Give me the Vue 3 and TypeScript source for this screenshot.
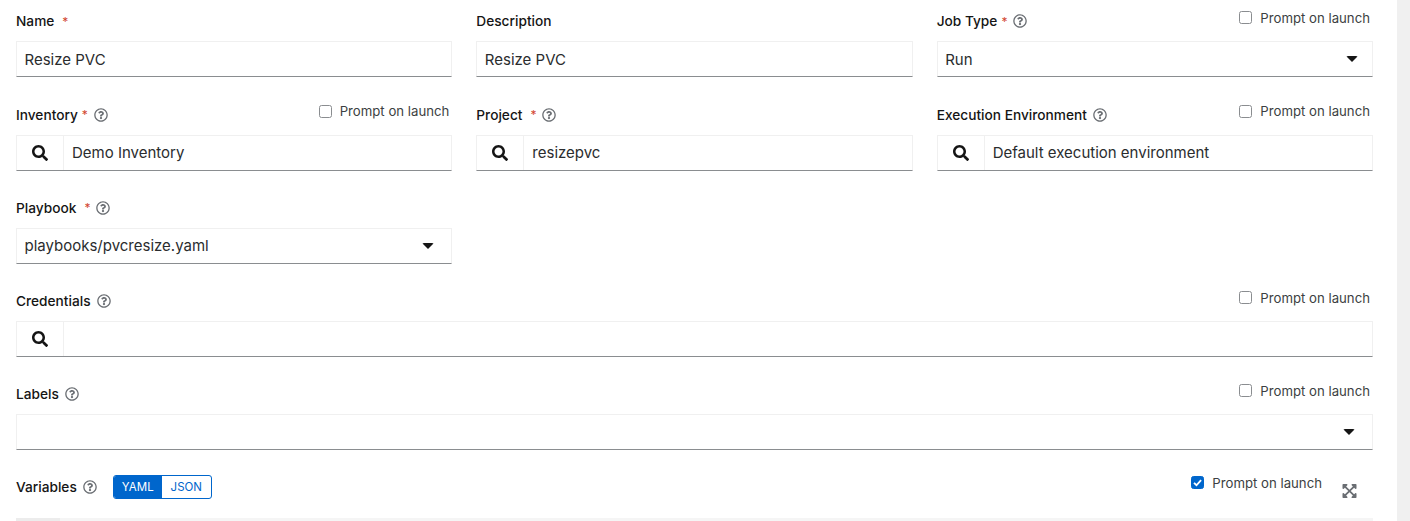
<script setup lang="ts">
interface Field {
  label: string;
  required?: boolean;
  wideStar?: boolean;
  help?: boolean;
  prompt?: boolean;
  kind: 'text' | 'select' | 'lookup';
  value: string;
  span?: boolean;
  skipAfter?: boolean;
}
const fields: Field[] = [
  { label: 'Name', required: true, wideStar: true, kind: 'text', value: 'Resize PVC' },
  { label: 'Description', kind: 'text', value: 'Resize PVC' },
  { label: 'Job Type', required: true, help: true, prompt: true, kind: 'select', value: 'Run' },
  { label: 'Inventory', required: true, help: true, prompt: true, kind: 'lookup', value: 'Demo Inventory' },
  { label: 'Project', required: true, wideStar: true, help: true, kind: 'lookup', value: 'resizepvc' },
  { label: 'Execution Environment', help: true, prompt: true, kind: 'lookup', value: 'Default execution environment' },
  { label: 'Playbook', required: true, wideStar: true, help: true, kind: 'select', value: 'playbooks/pvcresize.yaml', skipAfter: true },
  { label: 'Credentials', help: true, prompt: true, kind: 'lookup', value: '', span: true },
  { label: 'Labels', help: true, prompt: true, kind: 'select', value: '', span: true },
];
const helpPath = 'M256 8C119 8 8 119.043 8 256c0 136.995 111 248 248 248s248-111.005 248-248C504 119.043 393 8 256 8zm0 448c-110.532 0-200-89.451-200-200 0-110.531 89.451-200 200-200 110.532 0 200 89.451 200 200 0 110.532-89.451 200-200 200zm107.244-255.2c0 67.052-72.421 68.084-72.421 92.863V300c0 6.627-5.373 12-12 12h-45.647c-6.627 0-12-5.373-12-12v-8.659c0-35.745 27.1-50.034 47.579-61.516 17.561-9.845 28.324-16.541 28.324-29.579 0-17.246-21.999-28.693-39.784-28.693-23.189 0-33.894 10.977-48.942 29.969-4.057 5.12-11.46 6.071-16.666 2.124l-27.824-21.098c-5.107-3.873-6.251-11.066-2.644-16.363C184.846 131.491 214.94 112 261.794 112c49.071 0 101.45 38.304 101.45 88.8zM298 368c0 23.159-18.841 42-42 42s-42-18.841-42-42 18.841-42 42-42 42 18.841 42 42z';
const searchPath = 'M505 442.7L405.3 343c-4.5-4.5-10.6-7-17-7H372c27.6-35.3 44-79.7 44-128C416 93.1 322.9 0 208 0S0 93.1 0 208s93.1 208 208 208c48.3 0 92.7-16.4 128-44v16.3c0 6.4 2.5 12.5 7 17l99.7 99.7c9.4 9.4 24.6 9.4 33.9 0l28.3-28.3c9.4-9.4 9.4-24.6.1-34zM208 336c-70.7 0-128-57.2-128-128 0-70.7 57.2-128 128-128 70.7 0 128 57.2 128 128 0 70.7-57.2 128-128 128z';
const expandPath = 'M448 344v112a23.94 23.94 0 0 1-24 24H312c-21.39 0-32.09-25.9-17-41l36.2-36.2L224 295.6 116.77 402.9 153 439c15.09 15.1 4.39 41-17 41H24a23.94 23.94 0 0 1-24-24V344c0-21.4 25.89-32.1 41-17l36.19 36.2L184.46 256 77.18 148.7 41 185c-15.1 15.1-41 4.4-41-17V56a23.94 23.94 0 0 1 24-24h112c21.39 0 32.09 25.9 17 41l-36.2 36.2L224 216.4l107.23-107.3L295 73c-15.09-15.1-4.39-41 17-41h112a23.94 23.94 0 0 1 24 24v112c0 21.4-25.89 32.1-41 17l-36.19-36.2L263.54 256l107.28 107.3L407 327.1c15.1-15.2 41-4.5 41 16.9z';
</script>

<template>
  <div class="page">
    <main class="form">
      <div class="grid">
        <template v-for="f in fields" :key="f.label">
          <div class="field" :class="{ span: f.span }">
            <div class="head">
              <span class="label">{{ f.label }}</span>
              <span v-if="f.required" class="star" :class="{ wide: f.wideStar }">*</span>
              <svg v-if="f.help" class="help" viewBox="0 0 512 512"><path :d="helpPath" /></svg>
              <label v-if="f.prompt" class="prompt"><span class="box"></span>Prompt on launch</label>
            </div>
            <div class="control">
              <span v-if="f.kind === 'lookup'" class="search">
                <svg viewBox="0 0 512 512"><path :d="searchPath" /></svg>
              </span>
              <span class="value">{{ f.value }}</span>
              <span v-if="f.kind === 'select'" class="caret"></span>
            </div>
          </div>
          <div v-if="f.skipAfter" class="filler"></div>
        </template>
        <div class="field span vars">
          <div class="head">
            <span class="label">Variables</span>
            <svg class="help" viewBox="0 0 512 512"><path :d="helpPath" /></svg>
            <div class="toggle">
              <span class="on">YAML</span>
              <span class="off">JSON</span>
            </div>
            <label class="prompt checked">
              <span class="box">
                <svg viewBox="0 0 12 12"><path d="M2.2 6.3 4.9 9l5-5.6" /></svg>
              </span>
              Prompt on launch
            </label>
            <svg class="expand" viewBox="0 0 448 512"><path :d="expandPath" /></svg>
          </div>
          <div class="editor"><span class="gutter"></span></div>
        </div>
      </div>
    </main>
    <div class="scrollbar"></div>
  </div>
</template>

<style>
html, body { margin: 0; background: #fff; overflow: hidden; }
</style>

<style scoped>
.page {
  display: flex;
  width: 1410px;
  height: 521px;
  overflow: hidden;
  font-family: "Inter", sans-serif;
  color: #151515;
  font-size: 14px;
}
.form {
  flex: 1;
  padding: 11.25px 24px 0 16px;
}
.scrollbar {
  width: 13px;
  background: #f0f0f0;
}
.grid {
  display: grid;
  grid-template-columns: repeat(3, 1fr);
  column-gap: 24px;
  row-gap: 27.25px;
}
.span { grid-column: 1 / -1; }
.head {
  display: flex;
  align-items: center;
  height: 20px;
  margin-bottom: 10px;
  position: relative;
}
.label {
  font-weight: 500;
  font-size: 13.7px;
}
.star {
  color: #d2452f;
  margin-left: 4px;
  font-size: 12px;
}
.star.wide { margin-left: 8px; }
.help {
  width: 14px;
  height: 14px;
  margin-left: 6px;
  fill: #6a6e73;
}
.prompt {
  margin-left: auto;
  margin-right: 3px;
  margin-top: -7px;
  display: flex;
  align-items: center;
  gap: 8px;
  font-size: 13.2px;
  color: #3c3f42;
}
.box {
  width: 13px;
  height: 13px;
  box-sizing: border-box;
  border: 1px solid #8a8d90;
  border-radius: 2.5px;
  background: #fff;
  display: flex;
}
.checked .box {
  background: #0066cc;
  border-color: #0066cc;
}
.box svg {
  width: 11px;
  height: 11px;
  fill: none;
  stroke: #fff;
  stroke-width: 2;
}
.control {
  height: 36px;
  box-sizing: border-box;
  border: 1px solid #f0f0f0;
  border-bottom: 1px solid #8a8d90;
  display: flex;
  align-items: center;
}
.value {
  flex: 1;
  padding-left: 7.5px;
  font-size: 15px;
  white-space: nowrap;
  color: #2a2c2e;
}
.search {
  width: 46px;
  height: 100%;
  flex: none;
  display: flex;
  align-items: center;
  justify-content: center;
  border-right: 1px solid #f0f0f0;
}
.search + .value { padding-left: 8px; }
.search svg {
  width: 16px;
  height: 16px;
  fill: #151515;
}
.caret {
  width: 0;
  height: 0;
  border-left: 6px solid transparent;
  border-right: 6px solid transparent;
  border-top: 6px solid #151515;
  margin-right: 17px;
  border-radius: 2px;
}
.field:nth-child(3) .caret { margin-right: 14px; }
.toggle {
  display: flex;
  margin-left: 16px;
  height: 24px;
  box-sizing: border-box;
  border: 1px solid #0066cc;
  border-radius: 3px;
  overflow: hidden;
  font-size: 11.5px;
  line-height: 22px;
}
.on {
  width: 48px;
  text-align: center;
  background: #0066cc;
  color: #fff;
}
.off {
  width: 49px;
  text-align: center;
  color: #0066cc;
}
.vars .head { margin-top: -1px; margin-bottom: 11px; }
.vars .prompt { margin-right: 0; margin-top: -8px; }
.expand {
  width: 15px;
  height: 16px;
  fill: #6a6e73;
  margin-left: 20px;
  margin-right: 16px;
  margin-top: 9px;
}
.editor {
  height: 40px;
  background: #f5f5f5;
  margin-top: 21px;
}
.gutter {
  display: block;
  width: 44px;
  height: 100%;
  background: #ececec;
}
</style>
